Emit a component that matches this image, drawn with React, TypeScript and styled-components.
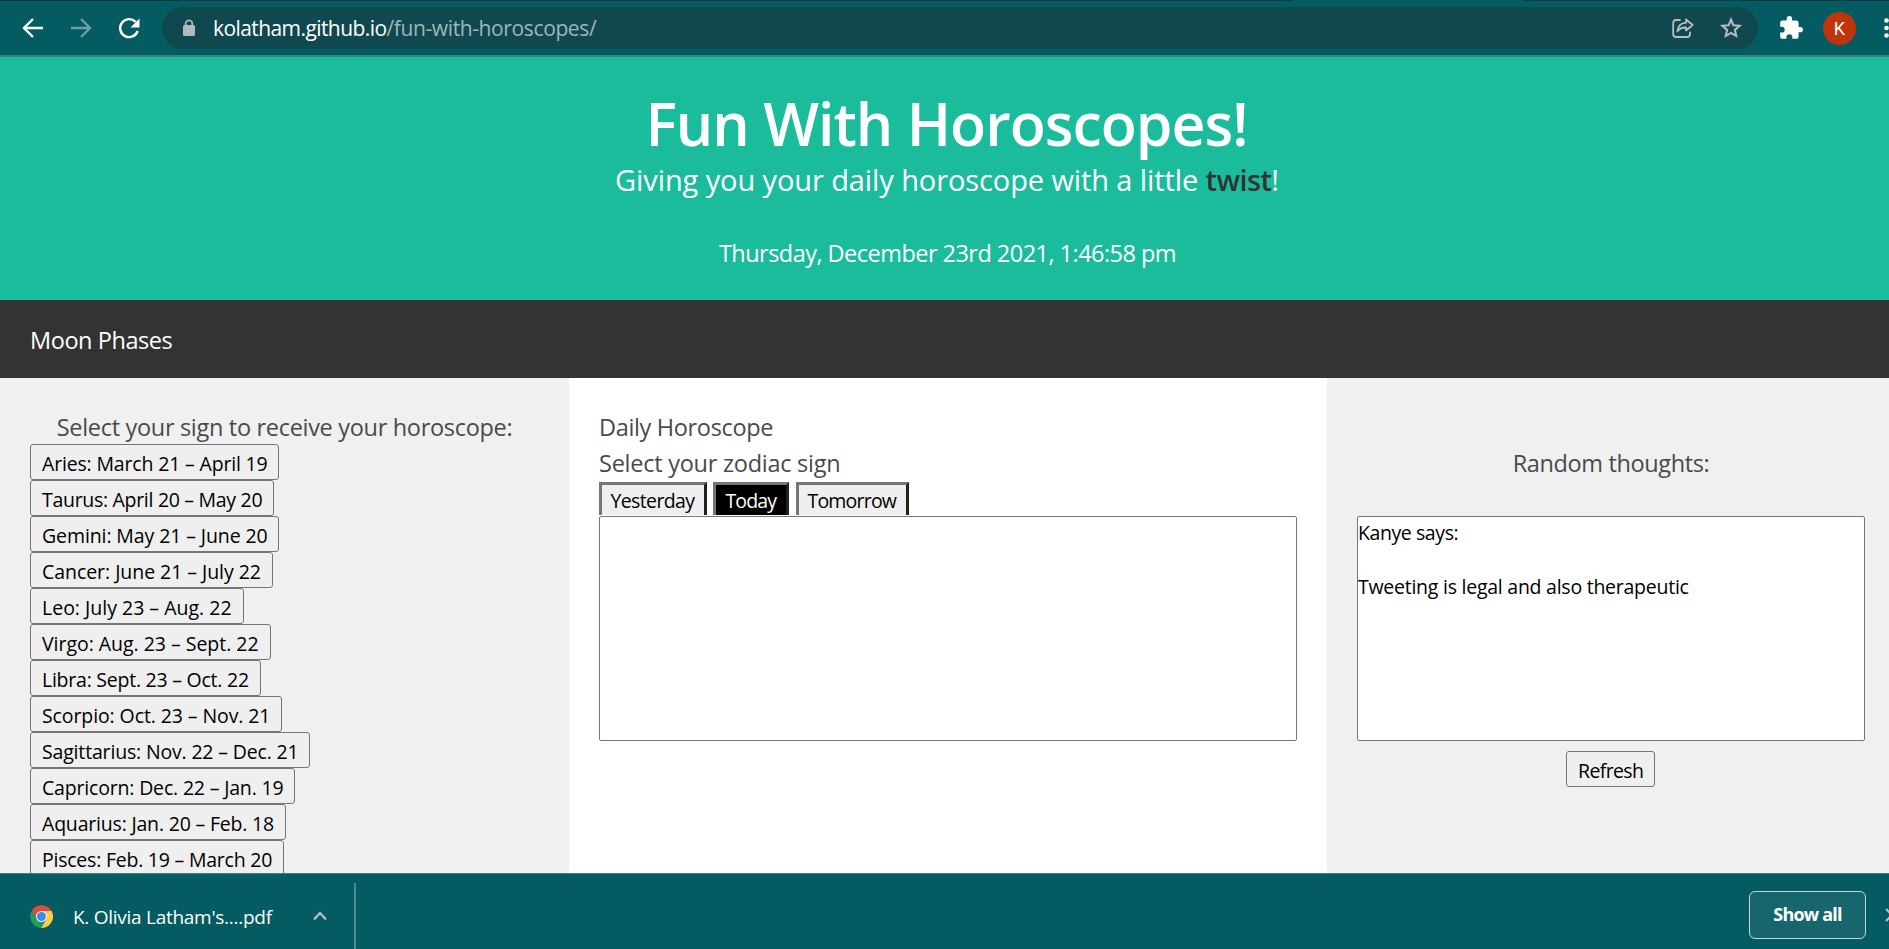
import React from "react";
import styled, { createGlobalStyle } from "styled-components";

const GlobalStyle = createGlobalStyle`
  * { box-sizing: border-box; }
  html, body { margin: 0; padding: 0; overflow: hidden; }
  body { font-family: "Segoe UI", "Open Sans", "Noto Sans", sans-serif; }
  h1, p { margin: 0; font-weight: 400; }
  button { font-family: inherit; }
  svg { display: block; flex: none; }
`;

const Window = styled.div`
  width: 1889px;
  height: 949px;
  display: flex;
  flex-direction: column;
  overflow: hidden;
  white-space: nowrap;
`;

/* Browser toolbar */
const TabEdge = styled.div`
  display: flex;
  justify-content: space-between;
  height: 1px;
  background: #045a61;
  flex: none;
`;
const TabEdgeShade = styled.div<{ $width: number }>`
  width: ${(p) => p.$width}px;
  background: #063a40;
`;
const Toolbar = styled.div`
  flex: none;
  height: 56px;
  background: #045b61;
  border-bottom: 2px solid #3c8085;
  display: flex;
  align-items: center;
  padding-left: 19px;
`;
const NavButtons = styled.div`
  flex: none;
  display: flex;
  gap: 20px;
  width: 143px;
`;
const AddressBar = styled.div`
  flex: none;
  width: 1596px;
  height: 42px;
  border-radius: 21px;
  background: #0f494f;
  display: flex;
  align-items: center;
  padding: 0 15px 0 20px;
`;
const Url = styled.div`
  flex: 1;
  margin-left: 17px;
  font-size: 21px;
  line-height: 38px;
  color: #9fb6b9;
  letter-spacing: -0.38px;
`;
const Domain = styled.span`
  color: #fff;
  letter-spacing: -0.58px;
`;
const PillIcons = styled.div`
  display: flex;
  align-items: center;
  gap: 25px;
`;
const Extensions = styled.div`
  flex: none;
  display: flex;
  align-items: center;
  padding-left: 20px;
`;
const Avatar = styled.div`
  width: 33px;
  height: 33px;
  margin: 0 28px 0 19px;
  border-radius: 50%;
  background: #c0340c;
  color: #fff;
  font: 18px/34px Roboto, sans-serif;
  text-align: center;
`;

/* Page */
const Header = styled.header`
  flex: none;
  height: 243px;
  padding-top: 30px;
  background: #1abc9c;
  color: #fff;
  text-align: center;
`;
const Title = styled.h1`
  && { font-weight: 600; }
  font-size: 59px;
  line-height: 72px;
  letter-spacing: -0.97px;
  padding-left: 4px;
`;
const Tagline = styled.p`
  font-size: 29px;
  line-height: 42px;
  letter-spacing: -0.1px;
  padding-left: 5px;
`;
const Twist = styled.b`
  font-weight: 600;
  color: #333;
  letter-spacing: -0.6px;
`;
const DateLine = styled.p`
  margin-top: 34px;
  padding-left: 6px;
  font-size: 23.5px;
  line-height: 37px;
  letter-spacing: -0.53px;
`;
const MoonNav = styled.nav`
  flex: none;
  height: 78px;
  padding: 2px 0 0 30px;
  display: flex;
  align-items: center;
  background: #333;
  color: #fff;
  font-size: 23.5px;
  letter-spacing: -0.44px;
`;
const Columns = styled.main`
  flex: none;
  height: 495px;
  display: flex;
  overflow: hidden;
`;
const Column = styled.section<{ $width: number; $bg: string; $top: number }>`
  flex: none;
  width: ${(p) => p.$width}px;
  padding: ${(p) => p.$top}px 30px 0;
  background: ${(p) => p.$bg};
`;
const Label = styled.p<{ $spacing: number; $center?: boolean }>`
  height: 36px;
  color: #4a4a4a;
  font-size: 23.5px;
  line-height: 39px;
  letter-spacing: ${(p) => p.$spacing}px;
  text-align: ${(p) => (p.$center ? "center" : "left")};
`;
const SignList = styled.div`
  display: flex;
  flex-direction: column;
`;
const Button = styled.button<{ $width: number; $spacing: number }>`
  width: ${(p) => p.$width}px;
  height: 36px;
  flex: none;
  padding: 3px 0 0 11px;
  border: 1px solid #767676;
  border-radius: 3px;
  background: #efefef;
  color: #000;
  font-size: 19.5px;
  line-height: 31px;
  letter-spacing: ${(p) => p.$spacing}px;
  text-align: left;
`;
const DayTabs = styled.div`
  display: flex;
  height: 33px;
  margin: 2px 0 1px;
  gap: 6px;
  overflow: hidden;
`;
const DayTab = styled.button<{ $width: number; $spacing: number; $active?: boolean }>`
  width: ${(p) => p.$width}px;
  height: 38px;
  padding: 0 0 0 ${(p) => (p.$active ? 9.5 : 8.5)}px;
  margin-right: ${(p) => (p.$active ? 1 : 0)}px;
  border: 3px solid;
  border-color: #767676 #212121 #212121 #767676;
  background: ${(p) => (p.$active ? "#000" : "#efefef")};
  color: ${(p) => (p.$active ? "#fff" : "#000")};
  font-size: 19.5px;
  line-height: 30px;
  letter-spacing: ${(p) => p.$spacing}px;
  text-align: left;
`;
const TextBox = styled.div<{ $width: number }>`
  width: ${(p) => p.$width}px;
  height: 225px;
  padding-top: 2px;
  border: 1px solid #767676;
  border-radius: 2px;
  background: #fff;
`;
const Quote = styled.p<{ $spacing: number }>`
  height: 54px;
  font-size: 19.5px;
  line-height: 27px;
  letter-spacing: ${(p) => p.$spacing}px;
  color: #000;
`;
const ThoughtsHead = styled.div`
  height: 72px;
  padding-left: 6px;
`;
const RefreshRow = styled.div`
  display: flex;
  justify-content: center;
  padding: 10px 0 0 5px;
`;

/* Download shelf */
const Shelf = styled.footer`
  flex: none;
  height: 76px;
  border-top: 1px solid #3c8085;
  background: #045b61;
  display: flex;
  align-items: center;
  padding-left: 30px;
  color: #fff;
`;
const Download = styled.div`
  display: flex;
  align-items: center;
  height: 66px;
  width: 326px;
  margin-top: 9px;
  border-right: 2px solid #4b8b90;
`;
const FileName = styled.span`
  width: 240px;
  margin-left: 20px;
  padding-top: 1px;
  font-size: 19px;
  letter-spacing: -0.27px;
`;
const ShowAll = styled.button`
  margin: 9px 19px 3px auto;
  width: 117px;
  height: 48px;
  padding: 0 0 1px;
  border: 1px solid #c3d6d8;
  border-radius: 6px;
  background: #17666d;
  color: #fff;
  font-size: 18px;
  font-weight: 700;
  letter-spacing: -0.8px;
`;
const ShelfIcon = styled.div`
  width: 4px;
  overflow: hidden;
  margin-top: 6px;
`;

const Arrow = ({ flip }: { flip?: boolean }) => (
  <svg width="28" height="28" viewBox="0 0 28 28" fill="none" stroke={flip ? "#6d9ea2" : "#fff"} strokeWidth="2.4">
    {flip ? <path d="M4 14H22.5M14 5l9 9-9 9" /> : <path d="M24 14H5.500M14 5l-9 9 9 9" />}
  </svg>
);
const Reload = () => (
  <svg width="28" height="28" viewBox="0 0 28 28">
    <path d="M20.6 7.8A9 9 0 1 0 22.700 17" fill="none" stroke="#fff" strokeWidth="2.4" />
    <path d="M24.500 4.500v9h-9z" fill="#fff" />
  </svg>
);
const Lock = () => (
  <svg width="14" height="18" viewBox="0 0 14 18">
    <rect x="1" y="6" width="12" height="11" rx="1.500" fill="#b1b9bc" />
    <path d="M3.700 7V4.600a3.300 3.300 0 0 1 6.600 0V7" fill="none" stroke="#b1b9bc" strokeWidth="1.700" />
  </svg>
);
const Share = () => (
  <svg width="22" height="20" viewBox="0 0 22 20" fill="none" stroke="#b9bfc1" strokeWidth="1.800" strokeLinejoin="round">
    <path d="M8 2H4Q1.200 2 1.200 5V16Q1.200 19 4 19H15Q18 19 18 16V14.500" strokeLinecap="round" />
    <path d="M14 1.500L20.700 7 14 12.500V9.500Q8.500 9.200 5.500 13.200Q6 5.500 14 4.700Z" />
  </svg>
);
const Star = () => (
  <svg width="24" height="24" viewBox="0 0 24 24">
    <path
      d="M12 3.500L14.400 9.300 20.600 9.800 15.900 13.900 17.300 20 12 16.800 6.700 20 8.100 13.900 3.400 9.800 9.600 9.300Z"
      fill="none" stroke="#b9bfc1" strokeWidth="2"
    />
  </svg>
);
const Puzzle = () => (
  <svg width="26" height="26" viewBox="0 0 24 24" fill="#fff">
    <path d="M20.500 11H19V7c0-1.100-.9-2-2-2h-4V3.500a2.500 2.500 0 0 0-5 0V5H4c-1.100 0-2 .9-2 2v3.800h1.500a2.700 2.700 0 0 1 0 5.400H2V20c0 1.100.9 2 2 2h3.800v-1.500a2.700 2.700 0 0 1 5.400 0V22H17c1.100 0 2-.9 2-2v-4h1.500a2.500 2.500 0 0 0 0-5z" />
  </svg>
);
const Dots = () => (
  <svg width="6" height="24" viewBox="0 0 6 24" fill="#fff">
    <circle cx="2.500" cy="4.500" r="2.300" />
    <circle cx="2.500" cy="12" r="2.300" />
    <circle cx="2.500" cy="19.500" r="2.300" />
  </svg>
);
const ChromeLogo = () => (
  <svg width="23" height="23" viewBox="0 0 48 48">
    <path d="M24 12.500H45A24 24 0 0 1 23 48L34 29.500Z" fill="#ffcd40" />
    <path d="M3.500 12A24 24 0 0 1 45 12.500H24L14 30Z" fill="#dd4b3e" />
    <path d="M3.500 12L14 30 24 35 31 34 23 48A24 24 0 0 1 3.500 12Z" fill="#1da05d" />
    <circle cx="24" cy="24" r="11.500" fill="#f1f1f1" />
    <circle cx="24" cy="24" r="9.300" fill="#4285f4" />
  </svg>
);

const signs: { label: string; width: number; spacing: number }[] = [
  { label: "Aries: March 21 – April 19", width: 249, spacing: -0.17 },
  { label: "Taurus: April 20 – May 20", width: 244, spacing: -0.3 },
  { label: "Gemini: May 21 – June 20", width: 249, spacing: -0.1 },
  { label: "Cancer: June 21 – July 22", width: 243, spacing: -0.05 },
  { label: "Leo: July 23 – Aug. 22", width: 214, spacing: 0 },
  { label: "Virgo: Aug. 23 – Sept. 22", width: 241, spacing: -0.03 },
  { label: "Libra: Sept. 23 – Oct. 22", width: 231, spacing: -0.24 },
  { label: "Scorpio: Oct. 23 – Nov. 21", width: 252, spacing: -0.1 },
  { label: "Sagittarius: Nov. 22 – Dec. 21", width: 280, spacing: -0.17 },
  { label: "Capricorn: Dec. 22 – Jan. 19", width: 265, spacing: -0.18 },
  { label: "Aquarius: Jan. 20 – Feb. 18", width: 256, spacing: -0.195 },
  { label: "Pisces: Feb. 19 – March 20", width: 254, spacing: -0.23 },
];

export default function App() {
  return (
    <Window>
      <GlobalStyle />
      <TabEdge>
        <TabEdgeShade $width={1293} />
        <TabEdgeShade $width={365} />
      </TabEdge>
      <Toolbar>
        <NavButtons>
          <Arrow />
          <Arrow flip />
          <Reload />
        </NavButtons>
        <AddressBar>
          <Lock />
          <Url><Domain>kolatham.github.io</Domain>/fun-with-horoscopes/</Url>
          <PillIcons>
            <Share />
            <Star />
          </PillIcons>
        </AddressBar>
        <Extensions>
          <Puzzle />
          <Avatar>K</Avatar>
          <Dots />
        </Extensions>
      </Toolbar>

      <Header>
        <Title>Fun With Horoscopes!</Title>
        <Tagline>Giving you your daily horoscope with a little <Twist>twist</Twist>!</Tagline>
        <DateLine>Thursday, December 23rd 2021, 1:46:58 pm</DateLine>
      </Header>
      <MoonNav>Moon Phases</MoonNav>

      <Columns>
        <Column $width={569} $bg="#f0f0f0" $top={30}>
          <Label $spacing={-0.31} $center>Select your sign to receive your horoscope:</Label>
          <SignList>
            {signs.map((s) => (
              <Button key={s.label} $width={s.width} $spacing={s.spacing}>{s.label}</Button>
            ))}
          </SignList>
        </Column>
        <Column $width={758} $bg="#fff" $top={30}>
          <Label $spacing={-0.34}>Daily Horoscope</Label>
          <Label $spacing={-0.25}>Select your zodiac sign</Label>
          <DayTabs>
            <DayTab $width={108} $spacing={-0.63}>Yesterday</DayTab>
            <DayTab $width={76} $spacing={-0.9} $active>Today</DayTab>
            <DayTab $width={113} $spacing={-0.8}>Tomorrow</DayTab>
          </DayTabs>
          <TextBox $width={698} />
        </Column>
        <Column $width={562} $bg="#f0f0f0" $top={66}>
          <ThoughtsHead>
            <Label $spacing={-0.37} $center>Random thoughts:</Label>
          </ThoughtsHead>
          <TextBox $width={508}>
            <Quote $spacing={-0.42}>Kanye says:</Quote>
            <Quote $spacing={-0.25}>Tweeting is legal and also therapeutic</Quote>
          </TextBox>
          <RefreshRow>
            <Button $width={89} $spacing={-0.62}>Refresh</Button>
          </RefreshRow>
        </Column>
      </Columns>

      <Shelf>
        <Download>
          <ChromeLogo />
          <FileName>K. Olivia Latham's....pdf</FileName>
          <svg width="14" height="10" viewBox="0 0 14 10" fill="none" stroke="#b4bfc1" strokeWidth="2.400">
            <path d="M1 8.500L7 2l6 6.500" />
          </svg>
        </Download>
        <ShowAll>Show all</ShowAll>
        <ShelfIcon>
          <svg width="14" height="14" viewBox="0 0 14 14" fill="none" stroke="#b4bfc1" strokeWidth="2.200">
            <path d="M1 1l12 12M1 13L13 1" />
          </svg>
        </ShelfIcon>
      </Shelf>
    </Window>
  );
}
